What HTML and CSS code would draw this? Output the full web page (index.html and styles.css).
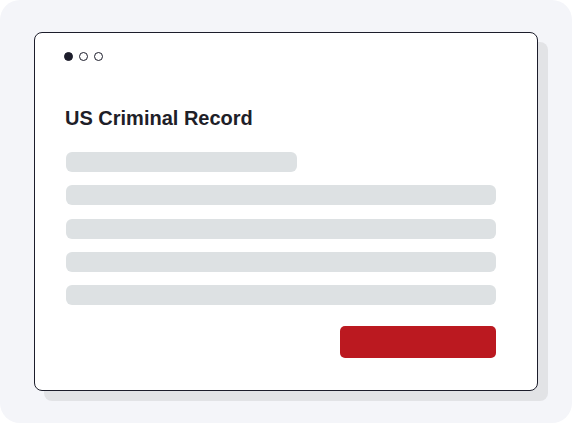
FILE: index.html
```html
<!DOCTYPE html>
<html lang="en">
<head>
<meta charset="utf-8">
<title>US Criminal Record</title>
<link rel="stylesheet" href="styles.css">
</head>
<body>
<div class="panel">
  <div class="card">
    <div class="dots">
      <span class="dot dot-filled"></span>
      <span class="dot"></span>
      <span class="dot"></span>
    </div>
    <h1 class="title">US Criminal Record</h1>
    <div class="bars">
      <div class="bar bar-short"></div>
      <div class="bar"></div>
      <div class="bar"></div>
      <div class="bar"></div>
      <div class="bar"></div>
    </div>
    <div class="actions">
      <div class="button"></div>
    </div>
  </div>
</div>
</body>
</html>
```
FILE: styles.css
```css
html, body {
  margin: 0;
  padding: 0;
  background: #ffffff;
}

.panel {
  width: 572px;
  height: 423px;
  box-sizing: border-box;
  padding: 32px 34px 0;
  background: #f4f5f9;
  border-radius: 20px;
}

.card {
  width: 504px;
  height: 359px;
  box-sizing: border-box;
  padding: 19px 41px 0 31px;
  background: #ffffff;
  border: 1px solid #1c1d2b;
  border-radius: 8px;
  box-shadow: 10px 10px 0 #e2e3e6;
}

.dots {
  display: flex;
  gap: 6px;
  margin-left: -2px;
}

.dot {
  width: 9px;
  height: 9px;
  box-sizing: border-box;
  border: 1.3px solid #1c1d2b;
  border-radius: 50%;
}

.dot-filled {
  background: #1c1d2b;
}

.title {
  margin: 45px 0 0 -1px;
  font-family: "Liberation Sans", Arial, sans-serif;
  font-weight: 700;
  font-size: 20px;
  line-height: 24px;
  color: #1e2028;
}

.bars {
  margin-top: 22px;
  display: flex;
  flex-direction: column;
  gap: 13.3px;
}

.bar {
  height: 20px;
  border-radius: 6px;
  background: #dde1e3;
}

.bar-short {
  width: 231px;
}

.actions {
  margin-top: 21px;
  display: flex;
  justify-content: flex-end;
}

.button {
  width: 156px;
  height: 32px;
  border-radius: 5px;
  background: #bb1920;
}
```
